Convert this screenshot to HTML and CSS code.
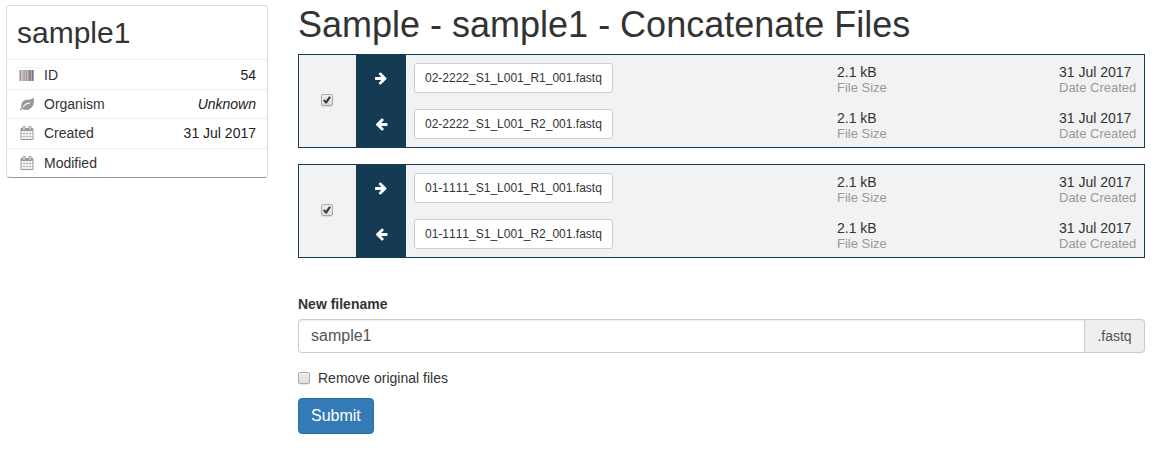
FILE: index.html
```html
<!DOCTYPE html>
<html lang="en">
<head>
<meta charset="utf-8">
<title>Concatenate Files</title>
<link rel="stylesheet" href="styles.css">
</head>
<body>
<svg class="defs" width="0" height="0">
  <symbol id="right" viewBox="0 0 1792 1792"><path d="M1600 960q0 54-37 91l-651 651q-39 37-91 37-51 0-90-37l-75-75q-38-38-38-91t38-91l293-293H245q-52 0-84.500-37.500T128 1024V896q0-53 32.500-90.500T245 768h704L656 474q-38-36-38-90t38-90l75-75q38-38 90-38 53 0 91 38l651 651q37 35 37 90z"/></symbol>
  <symbol id="left" viewBox="0 0 1792 1792"><path transform="translate(1856 0) scale(-1 1)" d="M1600 960q0 54-37 91l-651 651q-39 37-91 37-51 0-90-37l-75-75q-38-38-38-91t38-91l293-293H245q-52 0-84.500-37.500T128 1024V896q0-53 32.500-90.500T245 768h704L656 474q-38-36-38-90t38-90l75-75q38-38 90-38 53 0 91 38l651 651q37 35 37 90z"/></symbol>
  <symbol id="leaf" viewBox="0 256 1792 1280" preserveAspectRatio="none"><path d="M1280 704q0-26-19-45t-45-19q-172 0-318 49.500T638.500 823 378 1062q-19 21-19 44 0 26 19 45t45 19q24 0 45-19 27-24 74-71t67-66q137-124 268.500-176t313.500-52q26 0 45-19t19-45zm512-198q0 95-20 193-46 224-184.500 383T1230 1350q-214 108-438 108-148 0-286-47-15-5-88-42t-96-37q-16 0-39.500 32t-45 70-52.500 70-60 32q-43 0-63.500-17.500T16 1459q-2-4-6-11t-5.500-10-3-9.500T0 1416q0-35 31-73.500t68-65.500 68-56 31-48q0-4-14-38t-16-44q-9-51-9-104 0-115 43.500-220T321 582t184.500-138T717 356q55-18 145-25.500t179.500-9 178.500-6T1383 291t113.500-56.500l29.500-29.500 29.500-28 27-20 36.500-16 43.500-5q39 0 70.500 46t47.500 112 24 124 8 88z" transform="translate(0 120) scale(1 .97)"/></symbol>
  <symbol id="calendar" viewBox="0 0 1792 1792"><path d="M192 1664h288v-288H192v288zm352 0h320v-288H544v288zM192 1312h288V992H192v320zm352 0h320V992H544v320zM192 928h288V640H192v288zm736 736h320v-288H928v288zM544 928h320V640H544v288zm768 736h288v-288h-288v288zm-384-352h320V992H928v320zM576 448V160q0-13-9.500-22.500T544 128h-64q-13 0-22.500 9.500T448 160v288q0 13 9.500 22.500T480 480h64q13 0 22.500-9.500T576 448zm736 864h288V992h-288v320zM928 928h320V640H928v288zm384 0h288V640h-288v288zm32-480V160q0-13-9.500-22.500T1312 128h-64q-13 0-22.500 9.500T1216 160v288q0 13 9.500 22.500t22.500 9.500h64q13 0 22.500-9.500T1344 448zm384-64v1280q0 52-38 90t-90 38H192q-52 0-90-38t-38-90V384q0-52 38-90t90-38h128v-96q0-66 47-113T480 0h64q66 0 113 47t47 113v96h384v-96q0-66 47-113t113-47h64q66 0 113 47t47 113v96h128q52 0 90 38t38 90z"/></symbol>
</svg>
<div class="layout">
  <aside class="panel">
    <h2 class="panel-title">sample1</h2>
    <div class="item item-id"><svg class="barcode" viewBox="0 0 15 11" shape-rendering="crispEdges">
      <path fill="#e0bfa5" d="M0 0h1v11H0z"/><path fill="#7f93bd" d="M1 0h1v11H1z"/><path fill="#d0c5c9" d="M2 0h1v11H2z"/><path fill="#b9bfd5" d="M3 0h1v11H3z"/><path fill="#c8a99f" d="M4 0h1v11H4z"/><path fill="#94b0bd" d="M5 0h1v11H5z"/><path fill="#c9bd98" d="M6 0h1v11H6z"/><path fill="#969aa5" d="M7 0h1v11H7z"/><path fill="#c5c49b" d="M8 0h1v11H8z"/><path fill="#a89a92" d="M9 0h1v11H9z"/><path fill="#9a8792" d="M10 0h1v11h-1z"/><path fill="#827aa0" d="M11 0h1v11h-1z"/><path fill="#bda9a1" d="M12 0h1v11h-1z"/><path fill="#77728f" d="M13 0h1v11h-1z"/><path fill="#a4a2bc" d="M14 0h1v11h-1z"/></svg><span>ID</span><span class="value">54</span></div>
    <div class="item"><svg class="icon leaf"><use href="#leaf"/></svg><span>Organism</span><em class="value">Unknown</em></div>
    <div class="item item-created"><svg class="icon"><use href="#calendar"/></svg><span>Created</span><span class="value">31 Jul 2017</span></div>
    <div class="item"><svg class="icon"><use href="#calendar"/></svg><span>Modified</span></div>
  </aside>
  <main class="main">
    <h1 class="title">Sample - sample1 - Concatenate Files</h1>
    <section class="pair">
      <div class="select"><input class="check" type="checkbox" checked></div>
      <div class="files">
        <div class="file"><div class="arrow"><svg class="arrow-icon"><use href="#right"/></svg></div><div class="name"><button class="file-btn">02-2222_S1_L001_R1_001.fastq</button></div><div class="size">2.1 kB<small>File Size</small></div><div class="date">31 Jul 2017<small>Date Created</small></div></div>
        <div class="file"><div class="arrow"><svg class="arrow-icon"><use href="#left"/></svg></div><div class="name"><button class="file-btn">02-2222_S1_L001_R2_001.fastq</button></div><div class="size">2.1 kB<small>File Size</small></div><div class="date">31 Jul 2017<small>Date Created</small></div></div>
      </div>
    </section>
    <section class="pair">
      <div class="select"><input class="check" type="checkbox" checked></div>
      <div class="files">
        <div class="file"><div class="arrow"><svg class="arrow-icon"><use href="#right"/></svg></div><div class="name"><button class="file-btn">01-1111_S1_L001_R1_001.fastq</button></div><div class="size">2.1 kB<small>File Size</small></div><div class="date">31 Jul 2017<small>Date Created</small></div></div>
        <div class="file"><div class="arrow"><svg class="arrow-icon"><use href="#left"/></svg></div><div class="name"><button class="file-btn">01-1111_S1_L001_R2_001.fastq</button></div><div class="size">2.1 kB<small>File Size</small></div><div class="date">31 Jul 2017<small>Date Created</small></div></div>
      </div>
    </section>
    <form class="form">
      <label class="label" for="filename">New filename</label>
      <div class="group"><input class="input" id="filename" type="text" value="sample1"><span class="addon">.fastq</span></div>
      <label class="remove"><input class="check" type="checkbox">Remove original files</label>
      <button class="submit" type="button">Submit</button>
    </form>
  </main>
</div>
</body>
</html>
```
FILE: styles.css
```css
* { box-sizing: border-box; }
body { margin: 0; background: #fff; color: #333; font: 14px/20px "Liberation Sans", Arial, sans-serif; overflow: hidden; }
button, input { font-family: inherit; margin: 0; }
.defs { position: absolute; }
.layout { display: flex; align-items: flex-start; gap: 30px; padding: 5px 18px 0 6px; }

.panel { width: 262px; border: 1px solid #ddd; border-bottom-color: #999; border-radius: 4px; }
.panel-title { margin: 0; padding: 10px; font-size: 30px; line-height: 33px; font-weight: 400; }
.item { display: flex; align-items: center; height: 29px; padding: 0 11px 0 13px; border-top: 1px solid #eee; }
.item-id { position: relative; height: 30px; padding-top: 1px; }
.item-id::before { content: ""; position: absolute; left: 7px; top: 7px; width: 26px; height: 1px; background: #f3f3f3; }
.item-created { height: 30px; padding-bottom: 1px; }
.item:last-child { height: 29px; }
.icon { width: 14px; height: 14px; margin-right: 10px; fill: #999; }
.leaf { height: 12px; }
.barcode { width: 15px; height: 11px; margin: 0 10px 0 -1px; }
.icon, .barcode { flex: none; }
.value { margin-left: auto; color: #222; }

.main { flex: 1; }
.title { margin: 0 0 9px; font-size: 36px; line-height: 40px; font-weight: 400; }
.pair { display: flex; height: 94px; margin-bottom: 16px; border: 1px solid #143b53; background: #f2f2f2; }
.select { width: 57px; padding: 0 1px 2px 0; display: flex; align-items: center; justify-content: center; }
.files { flex: 1; }
.file { display: grid; grid-template-columns: 50px 1fr 222px 85px; height: 46px; }
.arrow { display: flex; align-items: center; justify-content: center; background: #143b53; }
.arrow-icon { width: 14px; height: 14px; fill: #fff; overflow: visible; }
.name { padding: 8px; }
.file-btn { height: 30px; padding: 0 10px; border: 1px solid #ccc; border-radius: 3px; background: #fff; color: #333; font-size: 12px; line-height: 18px; font-kerning: none; white-space: nowrap; }
.size, .date { padding-top: 9px; line-height: 16px; }
.size small, .date small { display: block; color: #999; font-size: 13px; line-height: 15px; }

.check { appearance: none; width: 12px; height: 12px; border: 1px solid #aaa; border-radius: 2px; background: linear-gradient(#eee, #dcdcdc); box-shadow: 0 1px 1px rgba(0, 0, 0, .1); position: relative; }
.check:checked::after { content: ""; position: absolute; inset: 1px; background: #3c3c3c; clip-path: polygon(0 55%, 18% 42%, 36% 58%, 76% 4%, 100% 16%, 48% 94%, 30% 94%); }

.form { padding-top: 20px; display: flex; flex-direction: column; align-items: flex-start; }
.label { font-weight: 700; margin-bottom: 5px; }
.group { display: flex; width: 100%; height: 34px; }
.input { flex: 1; padding: 0 12px; border: 1px solid #ccc; border-radius: 4px 0 0 4px; box-shadow: inset 0 1px 1px rgba(0, 0, 0, .075); color: #555; font-size: 16px; }
.addon { width: 60px; border: 1px solid #ccc; border-left: 0; border-radius: 0 4px 4px 0; background: #eee; color: #555; line-height: 32px; text-align: center; }
.remove { display: flex; align-items: center; gap: 8px; margin: 15px 0 10px; }
.submit { height: 36px; padding: 0 12px; border: 1px solid #2e6da4; border-radius: 4px; background: #337ab7; color: #fff; font-size: 16px; }
```
